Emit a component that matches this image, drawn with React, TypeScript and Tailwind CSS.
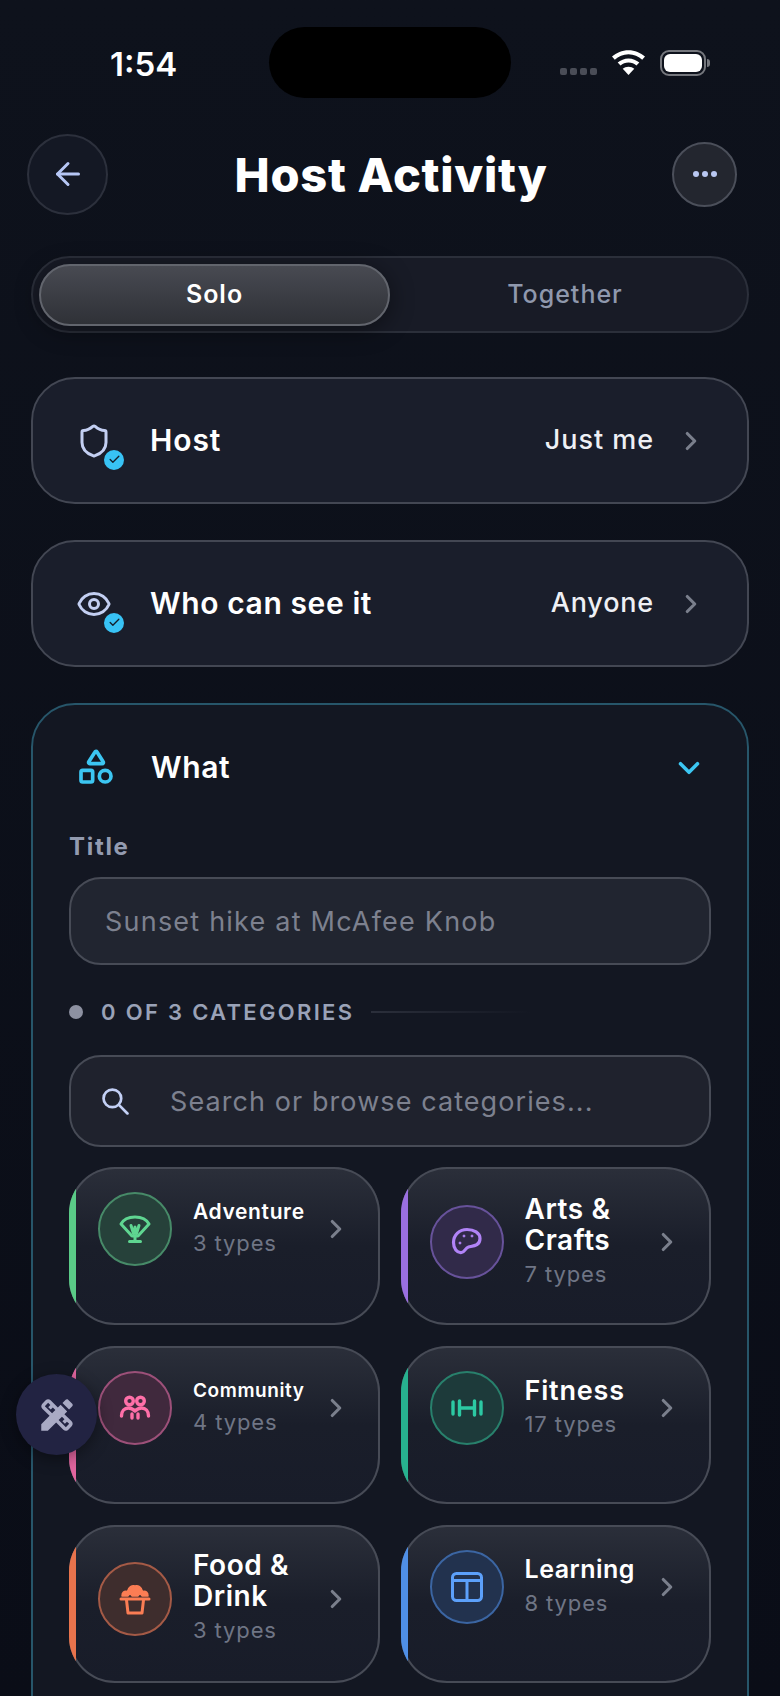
import { ArrowLeft, Check, ChevronDown, ChevronRight, Eye, Shapes, Shield } from "lucide-react";
import { MdDesignServices } from "react-icons/md";
import type { ReactNode } from "react";

function Paraglider() {
  return (
    <svg viewBox="0 0 32 32" className="w-8 h-8" fill="none" stroke="currentColor" strokeWidth="3" strokeLinecap="round" strokeLinejoin="round">
      <path d="M2 11C7 1.500 25 1.500 30 11L19 23h-6z" />
      <path d="M12 12.500l2.500 8M16 14v6M20 12.500l-2.500 8M16 23v4M10.500 28.500h11" />
    </svg>
  );
}

function People() {
  return (
    <svg viewBox="0 0 32 32" className="w-8 h-8" fill="none" stroke="currentColor" strokeWidth="3.400" strokeLinecap="round" strokeLinejoin="round">
      <circle cx="10.500" cy="9" r="3.800" />
      <circle cx="21.500" cy="9" r="3.800" />
      <path d="M2.500 24c0-5 3-8 7-8 2.500 0 4.500 1 6.500 3 2-2 4-3 6.500-3 4 0 7 3 7 8" />
      <path d="M13 26v-4M19 26v-4" />
    </svg>
  );
}

function Muffin() {
  return (
    <svg viewBox="0 0 32 32" className="w-8 h-8" fill="none" stroke="currentColor" strokeWidth="3" strokeLinecap="round" strokeLinejoin="round">
      <path d="M2 16h28M7.500 17l1.500 13h14l1.500-13" />
      <path fill="currentColor" strokeWidth="1.500" d="M3 13c0-3.500 2-5.500 5.500-4.500C9.500 4 13 2 16 3c3-1 6.500 1 7.500 5.500C27 7.500 29 9.500 29 13l-6 0c-1-2.500-3-2.500-4 0h-6c-1-2.500-3-2.500-4 0z" />
    </svg>
  );
}

function Palette() {
  return (
    <svg viewBox="0 0 32 32" className="w-8 h-8" fill="none" stroke="currentColor" strokeWidth="3.200" strokeLinejoin="round">
      <path d="M16 3.500C8.500 3.500 2.500 9 2.500 16.500c0 6 3.500 10.500 8 10 3.500-.5 3.500-4.500 7-5.500 3.500-1 11.500-.5 11.500-8.500 0-5.500-6-9-13-9z" />
      <circle cx="13" cy="10" r="1" fill="currentColor" strokeWidth="1" />
      <circle cx="21" cy="10" r="1" fill="currentColor" strokeWidth="1" />
      <circle cx="9" cy="17" r="1" fill="currentColor" strokeWidth="1" />
    </svg>
  );
}

function Barbell() {
  return (
    <svg viewBox="0 0 32 32" className="w-8 h-8" fill="none" stroke="currentColor" strokeWidth="3.400" strokeLinecap="round">
      <path d="M2 10v12M8.500 9v14M8.500 16h15M23.500 9v14M30 10v12" />
    </svg>
  );
}

function BookBox() {
  return (
    <svg viewBox="0 0 32 32" className="w-8 h-8" fill="none" stroke="currentColor" strokeWidth="3" strokeLinejoin="round">
      <rect x="1.500" y="2.500" width="29" height="27" rx="4" />
      <path d="M1.500 9.500h29M16 9.500v20" />
    </svg>
  );
}

const categories = [
  { name: "Adventure", count: "3 types", titleClass: "text-[21px] leading-[27px] tracking-[0.03em]", barClass: "bg-[#5acb87]", circleClass: "bg-[#26413a] border-[#478a68] text-[#5fd691]", icon: <Paraglider /> },
  { name: "Arts & Crafts", count: "7 types", titleClass: "mt-[2px] text-[28px] leading-[31px] tracking-[0.02em]", barClass: "bg-[#9a6fe0]", circleClass: "bg-[#312a49] border-[#67529a] text-[#b183f7]", icon: <Palette /> },
  { name: "Community", count: "4 types", titleClass: "text-[19px] leading-[27px] tracking-[0.03em]", barClass: "bg-[#e2659f]", circleClass: "bg-[#40293d] border-[#9c5079] text-[#ff6fa8]", icon: <People /> },
  { name: "Fitness", count: "17 types", titleClass: "text-[27px] leading-[31px] tracking-[0.03em]", barClass: "bg-[#27b18f]", circleClass: "bg-[#1d3a3a] border-[#28806c] text-[#2cc9a3]", icon: <Barbell /> },
  { name: "Food & Drink", count: "3 types", titleClass: "text-[28px] leading-[31px] tracking-[0.02em]", barClass: "bg-[#e8734c]", circleClass: "bg-[#3e2d2d] border-[#a45a46] text-[#fb7d54]", icon: <Muffin /> },
  { name: "Learning", count: "8 types", titleClass: "text-[25px] leading-[31px] tracking-[0.02em]", barClass: "bg-[#4f8fe6]", circleClass: "bg-[#22324e] border-[#3b65a2] text-[#5ca0fa]", icon: <BookBox /> },
];

function SettingRow({ icon, label, value, labelClass, valueClass }: { icon: ReactNode; label: string; value: string; labelClass: string; valueClass: string }) {
  return (
    <div className="mx-[31px] h-[127px] flex items-center rounded-[44px] border-2 border-[#434753] bg-[#1a1e2b] pl-[43px] pr-[41px]">
      <div className="relative w-[36px] h-[40px] flex items-center justify-center text-[#c3cff2]">
        {icon}
        <span className="absolute left-[26px] top-[27px] w-[24px] h-[24px] rounded-full border-2 border-[#1a1e2b] bg-[#38c3f5] flex items-center justify-center text-[#14202c]">
          <Check size={13} strokeWidth={2.5} />
        </span>
      </div>
      <span className={`ml-[38px] flex-1 text-[30px] font-semibold text-white ${labelClass}`}>{label}</span>
      <span className={`text-[27px] font-medium text-[#eef0f5] ${valueClass}`}>{value}</span>
      <ChevronRight size={30} strokeWidth={2.5} className="ml-[22px] text-[#7a7f8c]" />
    </div>
  );
}

export default function App() {
  return (
    <div className="relative w-[780px] h-[1696px] overflow-hidden bg-gradient-to-b from-[#0e121c] to-[#0a0d17] font-['Inter',sans-serif]">
      {/* Status bar */}
      <div className="grid grid-cols-[269px_242px_1fr] pt-[27px] h-[98px]">
        <div className="pl-[110px] pt-[18px] text-[33px] leading-[38px] font-semibold text-white">1:54</div>
        <div className="h-[71px] rounded-full bg-black" />
        <div className="flex items-start pl-[49px] pt-[23px]">
          <div className="flex gap-[3px] mt-[18px]">
            <span className="w-[7px] h-[7px] rounded-[2px] bg-[#4a4d57]" />
            <span className="w-[7px] h-[7px] rounded-[2px] bg-[#4a4d57]" />
            <span className="w-[7px] h-[7px] rounded-[2px] bg-[#4a4d57]" />
            <span className="w-[7px] h-[7px] rounded-[2px] bg-[#4a4d57]" />
          </div>
          <svg viewBox="0 0 32 24" className="ml-[15px] w-[33px] h-[25px]" fill="white">
            <path d="M16 0C9.800 0 4.300 2.400 0 6.300l2.700 3C6.200 6 10.900 4 16 4s9.800 2 13.300 5.300l2.700-3C27.700 2.400 22.200 0 16 0z" />
            <path d="M16 8c-4 0-7.700 1.600-10.500 4l2.800 3c2-1.800 4.700-2.900 7.700-2.900s5.700 1.100 7.700 2.900l2.800-3C23.700 9.600 20 8 16 8z" />
            <path d="M16 16c-2.200 0-4.200.8-5.600 2.100L16 24l5.600-5.900C20.200 16.800 18.200 16 16 16z" />
          </svg>
          <div className="ml-[15px] flex items-center">
            <div className="w-[46px] h-[26px] rounded-[9px] border-2 border-[#75777d] p-[2px]">
              <div className="w-full h-full rounded-[6px] bg-white" />
            </div>
            <span className="ml-[1px] w-[3px] h-[8px] rounded-r-full bg-[#75777d]" />
          </div>
        </div>
      </div>

      {/* Header */}
      <div className="mt-[36px] h-[80px] pl-[27px] pr-[43px] flex items-center justify-between">
        <button className="w-[81px] h-[81px] rounded-full border-2 border-[#2c303c] bg-[#141824] flex items-center justify-center text-[#b6c6f5]">
          <ArrowLeft size={36} strokeWidth={2} />
        </button>
        <h1 className="ml-[2px] text-[47px] leading-none font-extrabold tracking-[0.015em] text-white">Host Activity</h1>
        <button className="w-[65px] h-[65px] rounded-full border-2 border-[#4b4f5a] bg-[#23262f] flex items-center justify-center gap-[3px]">
          <span className="w-[6px] h-[6px] rounded-full bg-[#b9c7f2]" />
          <span className="w-[6px] h-[6px] rounded-full bg-[#b9c7f2]" />
          <span className="w-[6px] h-[6px] rounded-full bg-[#b9c7f2]" />
        </button>
      </div>

      {/* Solo / Together */}
      <div className="mt-[42px] mx-[31px] h-[77px] rounded-full border-2 border-[#2b2f3a] bg-[#181b26] pl-[6px] pr-[7px] flex items-center">
        <div className="w-[351px] h-[62px] pt-[1px] rounded-full border-2 border-[#62656d] bg-gradient-to-b from-[#484a52] to-[#2f3137] shadow-[0_4px_24px_rgba(0,0,0,0.45)] flex items-center justify-center text-[25px] font-semibold tracking-[0.04em] text-white">
          Solo
        </div>
        <div className="flex-1 pt-[1px] flex items-center justify-center text-[25px] font-medium tracking-[0.04em] text-[#8f98ad]">Together</div>
      </div>

      <div className="mt-[44px] flex flex-col gap-[36px]">
        <SettingRow icon={<Shield size={42} strokeWidth={2} />} label="Host" value="Just me" labelClass="tracking-[0.03em]" valueClass="tracking-[0.035em]" />
        <SettingRow icon={<Eye size={46} strokeWidth={2} />} label="Who can see it" value="Anyone" labelClass="tracking-[0.02em]" valueClass="tracking-[0.03em]" />
      </div>

      {/* What panel */}
      <div className="mt-[36px] mx-[31px] h-[1100px] rounded-t-[44px] border-2 border-[#27566a] bg-[#131722] px-[36px] pt-[40px]">
        <div className="h-[44px] flex items-center pl-[7px] pr-[5px]">
          <Shapes size={40} strokeWidth={2.2} className="text-[#3cc6f2]" />
          <span className="ml-[35px] flex-1 text-[30px] font-semibold tracking-[0.02em] text-white">What</span>
          <ChevronDown size={34} strokeWidth={2.5} className="mt-[2px] text-[#3cc6f2]" />
        </div>

        <div className="mt-[43px] text-[24px] leading-[30px] font-bold tracking-[0.07em] text-[#939bb0]">Title</div>
        <input
          readOnly
          placeholder="Sunset hike at McAfee Knob"
          className="mt-[15px] w-full h-[88px] rounded-[32px] border-2 border-[#474b56] bg-[#212530] px-[34px] text-[27px] tracking-[0.045em] outline-none placeholder:text-[#7d818f]"
        />

        <div className="mt-[34px] h-[26px] flex items-center">
          <span className="w-[14px] h-[14px] rounded-full bg-[#8d91a1]" />
          <span className="ml-[18px] text-[22px] font-semibold tracking-[0.105em] text-[#9aa2b7]">0 OF 3 CATEGORIES</span>
          <span className="ml-[17px] w-[160px] h-[2px] bg-gradient-to-r from-[#2b2f3b] to-transparent" />
        </div>

        <div className="mt-[30px] h-[92px] rounded-[32px] border-2 border-[#474b56] bg-[#1f222d] flex items-center pl-[31px]">
          <svg viewBox="0 0 26 26" className="w-[27px] h-[27px] text-[#c3d0f5]" fill="none" stroke="currentColor" strokeWidth="2.600" strokeLinecap="round">
            <circle cx="10" cy="10" r="8.500" />
            <path d="M16.500 16.500l8 8" />
          </svg>
          <span className="ml-[41px] mt-[2px] text-[27px] tracking-[0.04em] text-[#7d818f]">Search or browse categories...</span>
        </div>

        <div className="mt-[20px] grid grid-cols-2 gap-x-[21px] gap-y-[21px]">
          {categories.map((c) => (
            <div
              key={c.name}
              className="relative h-[158px] overflow-hidden rounded-[46px] shadow-[inset_0_0_0_2px_#474b56] bg-gradient-to-b from-[#2b2f3a] via-[#1a1e2a] to-[#181c29] pl-[29px] pr-[29px] pt-[25px]"
            >
              <span className={`absolute left-0 top-0 bottom-0 w-[7px] ${c.barClass}`} />
              <div className="flex items-center">
                <div className={`shrink-0 w-[74px] h-[74px] rounded-full border-2 flex items-center justify-center ${c.circleClass}`}>
                  {c.icon}
                </div>
                <div className="ml-[21px] flex-1 min-w-0">
                  <div className={`font-semibold text-white ${c.titleClass}`}>{c.name}</div>
                  <div className="text-[22px] leading-[36px] tracking-[0.04em] text-[#6f7585]">{c.count}</div>
                </div>
                <ChevronRight size={30} strokeWidth={2.5} className="shrink-0 text-[#7a7f8c]" />
              </div>
            </div>
          ))}
        </div>
      </div>

      {/* Floating dev tool button */}
      <button className="absolute left-[16px] top-[1374px] w-[81px] h-[81px] rounded-full bg-[#222342] shadow-[0_4px_16px_rgba(0,0,0,0.4)] flex items-center justify-center text-[#a9aac4]">
        <MdDesignServices size={42} />
      </button>
    </div>
  );
}
